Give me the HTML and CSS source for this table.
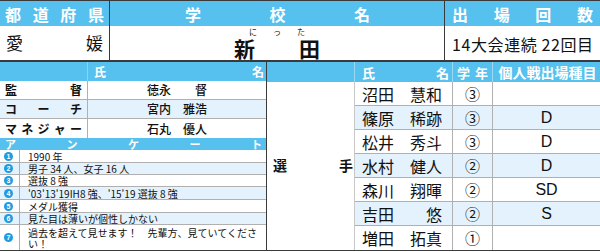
FILE: index.html
```html
<!DOCTYPE html>
<html lang="ja">
<head>
<meta charset="utf-8">
<link rel="stylesheet" href="styles.css">
</head>
<body>
<div class="sheet">
  <div class="top">
    <div class="th pref"><span>都</span><span>道</span><span>府</span><span>県</span></div>
    <div class="th school"><span>学</span><span>校</span><span>名</span></div>
    <div class="th count"><span>出</span><span>場</span><span>回</span><span>数</span></div>
    <div class="pref-v"><span>愛</span><span>媛</span></div>
    <div class="school-v">
      <div class="school-box">
        <div class="ruby"><span>に</span><span>っ</span><span>た</span></div>
        <div class="kanji"><span>新</span><span>田</span></div>
      </div>
    </div>
    <div class="count-v">14大会連続 22回目</div>
  </div>
  <div class="bottom">
    <div class="left">
      <div class="staff">
        <div class="hd hd-blank"></div>
        <div class="hd hd-name"><span>氏</span><span>名</span></div>
        <div class="lab"><span>監</span><span>督</span></div>
        <div class="nm">徳永　　督</div>
        <div class="lab alt"><span>コ</span><span>ー</span><span>チ</span></div>
        <div class="nm alt">宮内　雅浩</div>
        <div class="lab last"><span>マ</span><span>ネ</span><span>ジ</span><span>ャ</span><span>ー</span></div>
        <div class="nm last">石丸　優人</div>
      </div>
      <div class="survey-hd"><span>ア</span><span>ン</span><span>ケ</span><span>ー</span><span>ト</span></div>
      <div class="survey">
        <div class="no"><span class="dot">1</span></div><div class="ans">1990 年</div>
        <div class="no alt"><span class="dot">2</span></div><div class="ans alt">男子 34 人、女子 16 人</div>
        <div class="no"><span class="dot">3</span></div><div class="ans">選抜 8 強</div>
        <div class="no alt"><span class="dot">4</span></div><div class="ans alt">'03'13'19IH8 強、'15'19 選抜 8 強</div>
        <div class="no"><span class="dot">5</span></div><div class="ans">メダル獲得</div>
        <div class="no alt"><span class="dot">6</span></div><div class="ans alt">見た目は薄いが個性しかない</div>
        <div class="no last"><span class="dot">7</span></div><div class="ans last">過去を超えて見せます！　先輩方、見ていてください！</div>
      </div>
    </div>
    <div class="players">
      <div class="ph"></div>
      <div class="ph ph-name"><span>氏</span><span>名</span></div>
      <div class="ph ph-grade"><span>学</span><span>年</span></div>
      <div class="ph ph-event">個人戦出場種目</div>
      <div class="plabel"><span>選</span><span>手</span></div>
      <div class="pn"><span>沼田</span><span>慧和</span></div><div class="pg">③</div><div class="pe"></div>
      <div class="pn alt"><span>篠原</span><span>稀跡</span></div><div class="pg alt">③</div><div class="pe alt">D</div>
      <div class="pn"><span>松井</span><span>秀斗</span></div><div class="pg">③</div><div class="pe">D</div>
      <div class="pn alt"><span>水村</span><span>健人</span></div><div class="pg alt">②</div><div class="pe alt">D</div>
      <div class="pn"><span>森川</span><span>翔暉</span></div><div class="pg">②</div><div class="pe">SD</div>
      <div class="pn alt"><span>吉田</span><span>悠</span></div><div class="pg alt">②</div><div class="pe alt">S</div>
      <div class="pn last"><span>増田</span><span>拓真</span></div><div class="pg last">①</div><div class="pe last"></div>
    </div>
  </div>
</div>
</body>
</html>
```
FILE: styles.css
```css
* { box-sizing: border-box; margin: 0; padding: 0; }
html, body { width: 600px; height: 252px; overflow: hidden; background: #fff; }
body { font-family: "Noto Sans CJK JP", "Noto Sans", sans-serif; color: #111; }

.sheet { width: 600px; border-top: 1px solid #3a3a3a; }

.top {
  display: grid;
  grid-template-columns: 110px 335px 155px;
  grid-template-rows: 25px 34px;
  border-bottom: 2px solid #3a3a3a;
}
.top > div { border-right: 1px solid #3a3a3a; }
.top > div:nth-child(3n) { border-right: 0; }

.th {
  background: #56c1ee;
  color: #fff;
  font-weight: 700;
  font-size: 16px;
  line-height: 1;
  display: flex;
  justify-content: space-between;
  align-items: center;
}
.pref { padding: 0 5px 0 5px; }
.school { padding: 0 74px 0 75px; }
.count { padding: 0 7px 0 7px; }

.pref-v {
  display: flex;
  justify-content: space-between;
  align-items: center;
  padding: 0 6px 0 6px;
  font-size: 17px;
  line-height: 20px;
}
.school-v { display: flex; justify-content: center; }
.school-box { width: 86px; display: flex; flex-direction: column; }
.ruby {
  display: flex;
  justify-content: space-between;
  padding: 0 15px 0 15px;
  margin-top: 1px;
  font-size: 8px;
  line-height: 9px;
  height: 9px;
}
.kanji {
  display: flex;
  justify-content: space-between;
  margin-top: 1px;
  font-size: 21px;
  font-weight: 700;
  line-height: 22px;
}
.count-v {
  display: flex;
  align-items: center;
  padding: 1px 0 0 7px;
  font-size: 16px;
  letter-spacing: 0.6px;
  line-height: 20px;
}

.bottom {
  display: grid;
  grid-template-columns: 267px 333px;
  border-bottom: 1px solid #3a3a3a;
}
.left { border-right: 1px solid #3a3a3a; }

.staff {
  display: grid;
  grid-template-columns: 88px 1fr;
  grid-template-rows: 19px 19px 19px 19px;
}
.hd { background: #56c1ee; color: #fff; font-weight: 700; font-size: 12px; line-height: 1; }
.hd-blank { border-right: 1px solid #8fd3f2; }
.hd-name { display: flex; justify-content: space-between; align-items: center; padding: 0 2px 0 6px; }
.lab {
  display: flex;
  justify-content: space-between;
  align-items: center;
  padding: 0 5px;
  font-size: 12px;
  line-height: 14px;
  font-weight: 700;
  border-right: 1px solid #b0b0b0;
  border-bottom: 1px solid #b0b0b0;
}
.nm {
  display: flex;
  justify-content: center;
  align-items: center;
  font-size: 12px;
  line-height: 14px;
  font-weight: 500;
  border-bottom: 1px solid #b0b0b0;
}
.staff .last { border-bottom: 0; }
.alt { background: #e3f2fc; }

.survey-hd {
  height: 12px;
  background: #56c1ee;
  color: #fff;
  font-weight: 700;
  font-size: 11px;
  line-height: 12px;
  display: flex;
  justify-content: space-between;
  padding: 0 4px 0 5px;
}
.survey {
  display: grid;
  grid-template-columns: 20px 1fr;
  grid-template-rows: 13px 12px 12px 13px 13px 12px 25px;
}
.no {
  display: flex;
  justify-content: center;
  align-items: center;
  border-right: 1px solid #b0b0b0;
  border-bottom: 1px solid #b0b0b0;
  padding-right: 2px;
}
.dot {
  width: 9px;
  height: 9px;
  border-radius: 50%;
  background: #1f9be0;
  color: #fff;
  font-family: "Liberation Sans", sans-serif;
  font-weight: 700;
  font-size: 7px;
  line-height: 9px;
  text-align: center;
}
.ans {
  display: flex;
  align-items: center;
  padding-left: 8px;
  font-size: 10px;
  line-height: 11px;
  border-bottom: 1px solid #b0b0b0;
}
.survey .last { border-bottom: 0; }

.players {
  display: grid;
  grid-template-columns: 88px 98px 40px 1fr;
  grid-template-rows: 20px repeat(7, 24px);
}
.ph {
  background: #56c1ee;
  color: #fff;
  font-weight: 700;
  font-size: 13px;
  line-height: 1;
  border-right: 1px solid #9ad8f4;
  display: flex;
  align-items: center;
}
.ph:nth-child(4) { border-right: 0; }
.ph-name { justify-content: space-between; padding: 0 3px 0 7px; }
.ph-grade { justify-content: space-between; padding: 0 4px; }
.ph-event { justify-content: center; font-size: 14px; padding-left: 2px; }

.plabel {
  grid-row: 2 / span 7;
  display: flex;
  justify-content: space-between;
  align-items: center;
  padding: 0 1px 2px 6px;
  font-size: 14px;
  font-weight: 700;
  border-right: 1px solid #c8c8c8;
}
.pn {
  display: flex;
  justify-content: space-between;
  align-items: center;
  padding: 0 10px 0 7px;
  font-size: 16px;
  line-height: 20px;
  border-right: 1px solid #b0b0b0;
  border-bottom: 1px solid #b0b0b0;
}
.pg {
  display: flex;
  justify-content: center;
  align-items: center;
  font-size: 15px;
  line-height: 20px;
  border-right: 1px solid #b0b0b0;
  border-bottom: 1px solid #b0b0b0;
}
.pe {
  display: flex;
  justify-content: center;
  align-items: center;
  font-family: "Liberation Sans", sans-serif;
  font-size: 16px;
  border-bottom: 1px solid #b0b0b0;
}
.players .last { border-bottom: 0; }
```
